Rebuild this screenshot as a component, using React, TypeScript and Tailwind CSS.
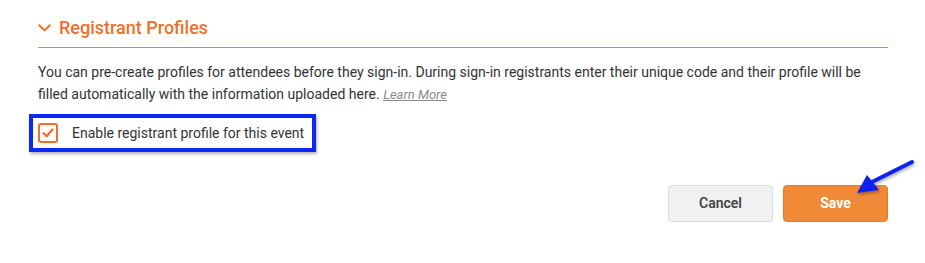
const ORANGE = 'text-[#ef6f2b]';

const Chevron = () => (
  <svg viewBox="0 0 13 8" className="w-[13px] h-[8px]" fill="none">
    <path d="M1.2 1.2 L6.5 6.4 L11.8 1.2" stroke="#ef6f2b" strokeWidth="2" strokeLinecap="round" strokeLinejoin="round" />
  </svg>
);

const RegistrantProfiles = () => {
  return (
    <div className="relative w-[925px] h-[263px] bg-white pl-[38px] pr-[37px] font-['Roboto',sans-serif]">
      {/* Section header */}
      <div className="flex items-center gap-[8px] pt-[16px] pb-[7px] border-b border-[#e8843f]">
        <Chevron />
        <h3 className={`${ORANGE} text-[18px] leading-[24px] font-medium`}>Registrant Profiles</h3>
      </div>

      <p className="mt-[13px] text-[14px] leading-[22px] text-[#333333]">
        You can pre-create profiles for attendees before they sign-in. During sign-in registrants enter their unique
        code and their profile will be filled automatically with the information uploaded here.{' '}
        <a className="inline-block italic underline text-[#8a8a8a] text-[13px] leading-[16px]">Learn More</a>
      </p>

      {/* Enable checkbox */}
      <div className="relative mt-[18px] flex items-center gap-[14px] h-[20px]">
        <span className="flex items-center justify-center w-[20px] h-[20px] border-2 border-[#ee7030] rounded-[3px] bg-white">
          <svg viewBox="0 0 12 12" className="w-[12px] h-[12px]" fill="none">
            <path d="M1.6 6.3 L4.6 9.3 L10.4 2.5" stroke="#ee7030" strokeWidth="2.3" strokeLinecap="round" strokeLinejoin="round" />
          </svg>
        </span>
        <span className="text-[14px] leading-[20px] text-[#333333]">Enable registrant profile for this event</span>
        {/* annotation highlight */}
        <div className="absolute left-[-9px] top-[-9px] w-[287px] h-[38px] border-4 border-[#0a2af2] shadow-[1px_2px_3px_rgba(0,0,0,0.3)] pointer-events-none" />
      </div>

      {/* Actions */}
      <div className="mt-[42px] flex justify-end gap-[10px]">
        <button className="w-[105px] h-[37px] rounded-[4px] bg-[#f1f1f1] border border-[#dcdcdc] text-[14px] font-semibold text-[#444444]">
          Cancel
        </button>
        <button className="w-[105px] h-[37px] rounded-[4px] bg-[#f08a36] border border-[#e57a28] text-[14px] font-bold text-white">
          Save
        </button>
      </div>

      {/* annotation arrow */}
      <svg className="absolute left-0 top-0 pointer-events-none" width="925" height="263" viewBox="0 0 925 263">
        <defs>
          <filter id="sh" x="-20%" y="-20%" width="140%" height="140%">
            <feDropShadow dx="1" dy="2" stdDeviation="1.5" floodOpacity="0.3" />
          </filter>
        </defs>
        <g filter="url(#sh)">
          <line x1="912" y1="162" x2="872" y2="182" stroke="#0a22f0" strokeWidth="4" strokeLinecap="round" />
          <polygon points="857,193 867,175 879,190" fill="#0a22f0" />
        </g>
      </svg>
    </div>
  );
};

export default function App() {
  return <RegistrantProfiles />;
}
